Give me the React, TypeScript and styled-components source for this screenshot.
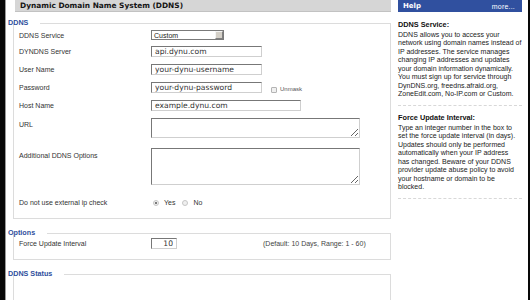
import React from 'react';
import styled, { createGlobalStyle } from 'styled-components';

const GlobalStyle = createGlobalStyle`
	html, body {
		margin: 0;
		padding: 0;
		background: #fff;
	}
	body {
		font-family: "Liberation Sans", Arial, sans-serif;
		color: #222;
	}
`;

const Page = styled.div`
	display: flex;
	width: 530px;
	height: 300px;
	overflow: hidden;
	background: #fff;
`;

const Edge = styled.div<{ $w: number; $line?: boolean }>`
	flex: none;
	width: ${(p) => p.$w}px;
	background: #080808;
	border-right: ${(p) => (p.$line ? '1px solid #9a9a9a' : 'none')};
`;

const Main = styled.main`
	flex: none;
	width: 385px;
	padding-left: 2px;
	box-sizing: border-box;
`;

const TitleBar = styled.div`
	margin-left: 7px;
	height: 12px;
	box-sizing: border-box;
	background: #d6d6d6;
	border-bottom: 1px solid #c2c2c2;
	padding-left: 5px;
	font: bold 7.4px "DejaVu Sans", Verdana, sans-serif;
	line-height: 11px;
	color: #151515;
	white-space: nowrap;
`;

const Group = styled.section<{ $top: number }>`
	margin-top: ${(p) => p.$top}px;
`;

const LegendRow = styled.div`
	display: flex;
	align-items: center;
	height: 10px;
`;

const LegendText = styled.span`
	font: bold 7.2px "Liberation Sans", Arial, sans-serif;
	line-height: 10px;
	color: #2f4f9d;
	padding-right: 12px;
	white-space: nowrap;
`;

const Rule = styled.span`
	flex: 1;
	border-top: 1px solid #dcdcdc;
`;

const Box = styled.div<{ $pt: number; $pb: number; $min?: number }>`
	margin: -5px 0 0 5px;
	border: 1px solid #dcdcdc;
	border-top: none;
	padding: ${(p) => p.$pt}px 0 ${(p) => p.$pb}px 5px;
	min-height: ${(p) => p.$min ?? 0}px;
`;

const Row = styled.div<{ $top?: number; $start?: boolean; $cols?: string }>`
	display: grid;
	grid-template-columns: ${(p) => p.$cols ?? '132px 1fr'};
	align-items: ${(p) => (p.$start ? 'start' : 'center')};
	margin-top: ${(p) => p.$top ?? 0}px;
`;

const Label = styled.span<{ $pt?: number }>`
	font-size: 7px;
	line-height: 9px;
	color: #333;
	padding-top: ${(p) => p.$pt ?? 0}px;
	white-space: nowrap;
`;

const Field = styled.input<{ $w: number; $right?: boolean }>`
	box-sizing: border-box;
	width: ${(p) => p.$w}px;
	height: 11px;
	margin: 0;
	border: 1px solid;
	border-color: #777 #cfcfcf #cfcfcf #777;
	padding: 0 ${(p) => (p.$right ? 3 : 0)}px 0 ${(p) => (p.$right ? 0 : 3)}px;
	font: 7.6px "DejaVu Sans", Verdana, sans-serif;
	line-height: 9px;
	color: #333;
	background: #fff;
	text-align: ${(p) => (p.$right ? 'right' : 'left')};
	outline: none;
`;

const Area = styled.textarea<{ $h: number }>`
	display: block;
	box-sizing: border-box;
	width: 209px;
	height: ${(p) => p.$h}px;
	margin: 0;
	border: 1px solid;
	border-color: #777 #cfcfcf #cfcfcf #777;
	padding: 1px 3px;
	font: 7.6px "DejaVu Sans", Verdana, sans-serif;
	background: #fff;
	outline: none;
`;

const SelectBox = styled.div`
	box-sizing: border-box;
	display: flex;
	align-items: center;
	width: 73px;
	height: 10px;
	border: 1px solid #7a7a7a;
	padding-left: 2px;
	font-size: 7px;
	color: #222;
	background: #fff;
`;

const SelectButton = styled.span`
	margin-left: auto;
	box-sizing: border-box;
	width: 8px;
	height: 8px;
	background: #d4d0c8;
	border: 1px solid;
	border-color: #f4f4f4 #808080 #808080 #f4f4f4;
`;

const Inline = styled.div<{ $end?: boolean }>`
	display: flex;
	align-items: ${(p) => (p.$end ? 'flex-end' : 'center')};
`;

const Check = styled.span`
	box-sizing: border-box;
	width: 6px;
	height: 6px;
	margin-left: 9px;
	border: 1px solid #b4b4b4;
	border-radius: 1px;
	background: #f0f0f0;
`;

const Small = styled.span`
	margin-left: 3px;
	font-size: 6px;
	line-height: 7px;
	color: #555;
`;

const Radio = styled.span<{ $on?: boolean; $gap: number }>`
	box-sizing: border-box;
	width: 6px;
	height: 6px;
	margin-left: ${(p) => p.$gap}px;
	border: 1px solid #c6c6c6;
	border-radius: 50%;
	background: ${(p) =>
		p.$on ? 'radial-gradient(circle, #7a7a7a 0 1.1px, #efefef 1.5px)' : '#efefef'};
`;

const RadioText = styled.span`
	margin-left: 5px;
	font-size: 7px;
	line-height: 9px;
	color: #333;
`;

const Note = styled.span`
	font-size: 7px;
	line-height: 9px;
	color: #444;
	white-space: nowrap;
`;

const Help = styled.aside`
	flex: none;
	width: 124px;
	margin: 0 6px 0 7px;
`;

const HelpHeader = styled.div`
	display: flex;
	justify-content: space-between;
	align-items: center;
	height: 12px;
	padding: 0 7px 0 5px;
	background: #30509f;
	color: #fff;
`;

const HelpTitle = styled.span`
	font: bold 7px "DejaVu Sans", Verdana, sans-serif;
`;

const More = styled.span`
	font-size: 7px;
	letter-spacing: 0.2px;
`;

const HelpSection = styled.div<{ $pt: number }>`
	padding: ${(p) => p.$pt}px 0 6px;
	border-bottom: 1px dashed #d8d8d8;
`;

const HelpHeading = styled.div`
	font-weight: bold;
	font-size: 7.3px;
	line-height: 9px;
	margin-bottom: 2px;
	color: #111;
`;

const HelpLine = styled.div`
	font-size: 7px;
	line-height: 8.5px;
	color: #222;
	white-space: nowrap;
`;

const help = [
	{
		title: 'DDNS Service:',
		pt: 7.5,
		lines: [
			'DDNS allows you to access your',
			'network using domain names instead of',
			'IP addresses. The service manages',
			'changing IP addresses and updates',
			'your domain information dynamically.',
			'You must sign up for service through',
			'DynDNS.org, freedns.afraid.org,',
			'ZoneEdit.com, No-IP.com or Custom.',
		],
	},
	{
		title: 'Force Update Interval:',
		pt: 7,
		lines: [
			'Type an integer number in the box to',
			'set the force update interval (in days).',
			'Updates should only be performed',
			'automatically when your IP address',
			'has changed. Beware of your DDNS',
			'provider update abuse policy to avoid',
			'your hostname or domain to be',
			'blocked.',
		],
	},
];

const textRows = [
	{ label: 'DYNDNS Server', value: 'api.dynu.com', top: 6 },
	{ label: 'User Name', value: 'your-dynu-username', top: 7 },
];

export default function App() {
	return (
		<>
			<GlobalStyle />
			<Page>
				<Edge $w={5} $line />
				<Main>
					<TitleBar>Dynamic Domain Name System (DDNS)</TitleBar>

					<Group $top={6}>
						<LegendRow>
							<LegendText>DDNS</LegendText>
							<Rule />
						</LegendRow>
						<Box $pt={7} $pb={11}>
							<Row>
								<Label>DDNS Service</Label>
								<SelectBox>
									Custom
									<SelectButton />
								</SelectBox>
							</Row>
							{textRows.map((r) => (
								<Row key={r.label} $top={r.top}>
									<Label>{r.label}</Label>
									<Field $w={111} defaultValue={r.value} />
								</Row>
							))}
							<Row $top={7}>
								<Label>Password</Label>
								<Inline $end>
									<Field $w={111} defaultValue="your-dynu-password" />
									<Check />
									<Small>Unmask</Small>
								</Inline>
							</Row>
							<Row $top={7}>
								<Label>Host Name</Label>
								<Field $w={150} defaultValue="example.dynu.com" />
							</Row>
							<Row $top={7} $start>
								<Label $pt={2}>URL</Label>
								<Area $h={20} />
							</Row>
							<Row $top={10} $start>
								<Label $pt={3}>Additional DDNS Options</Label>
								<Area $h={37} />
							</Row>
							<Row $top={13}>
								<Label>Do not use external ip check</Label>
								<Inline>
									<Radio $on $gap={2} />
									<RadioText>Yes</RadioText>
									<Radio $gap={7} />
									<RadioText>No</RadioText>
								</Inline>
							</Row>
						</Box>
					</Group>

					<Group $top={9}>
						<LegendRow>
							<LegendText>Options</LegendText>
							<Rule />
						</LegendRow>
						<Box $pt={5} $pb={10}>
							<Row $cols="132px 112px auto">
								<Label>Force Update Interval</Label>
								<Field $w={26} $right defaultValue="10" />
								<Note>(Default: 10 Days, Range: 1 - 60)</Note>
							</Row>
						</Box>
					</Group>

					<Group $top={9}>
						<LegendRow>
							<LegendText>DDNS Status</LegendText>
							<Rule />
						</LegendRow>
						<Box $pt={5} $pb={10} $min={40} />
					</Group>
				</Main>

				<Help>
					<HelpHeader>
						<HelpTitle>Help</HelpTitle>
						<More>more...</More>
					</HelpHeader>
					{help.map((s) => (
						<HelpSection key={s.title} $pt={s.pt}>
							<HelpHeading>{s.title}</HelpHeading>
							{s.lines.map((l) => (
								<HelpLine key={l}>{l}</HelpLine>
							))}
						</HelpSection>
					))}
				</Help>
				<Edge $w={2} />
			</Page>
		</>
	);
}
